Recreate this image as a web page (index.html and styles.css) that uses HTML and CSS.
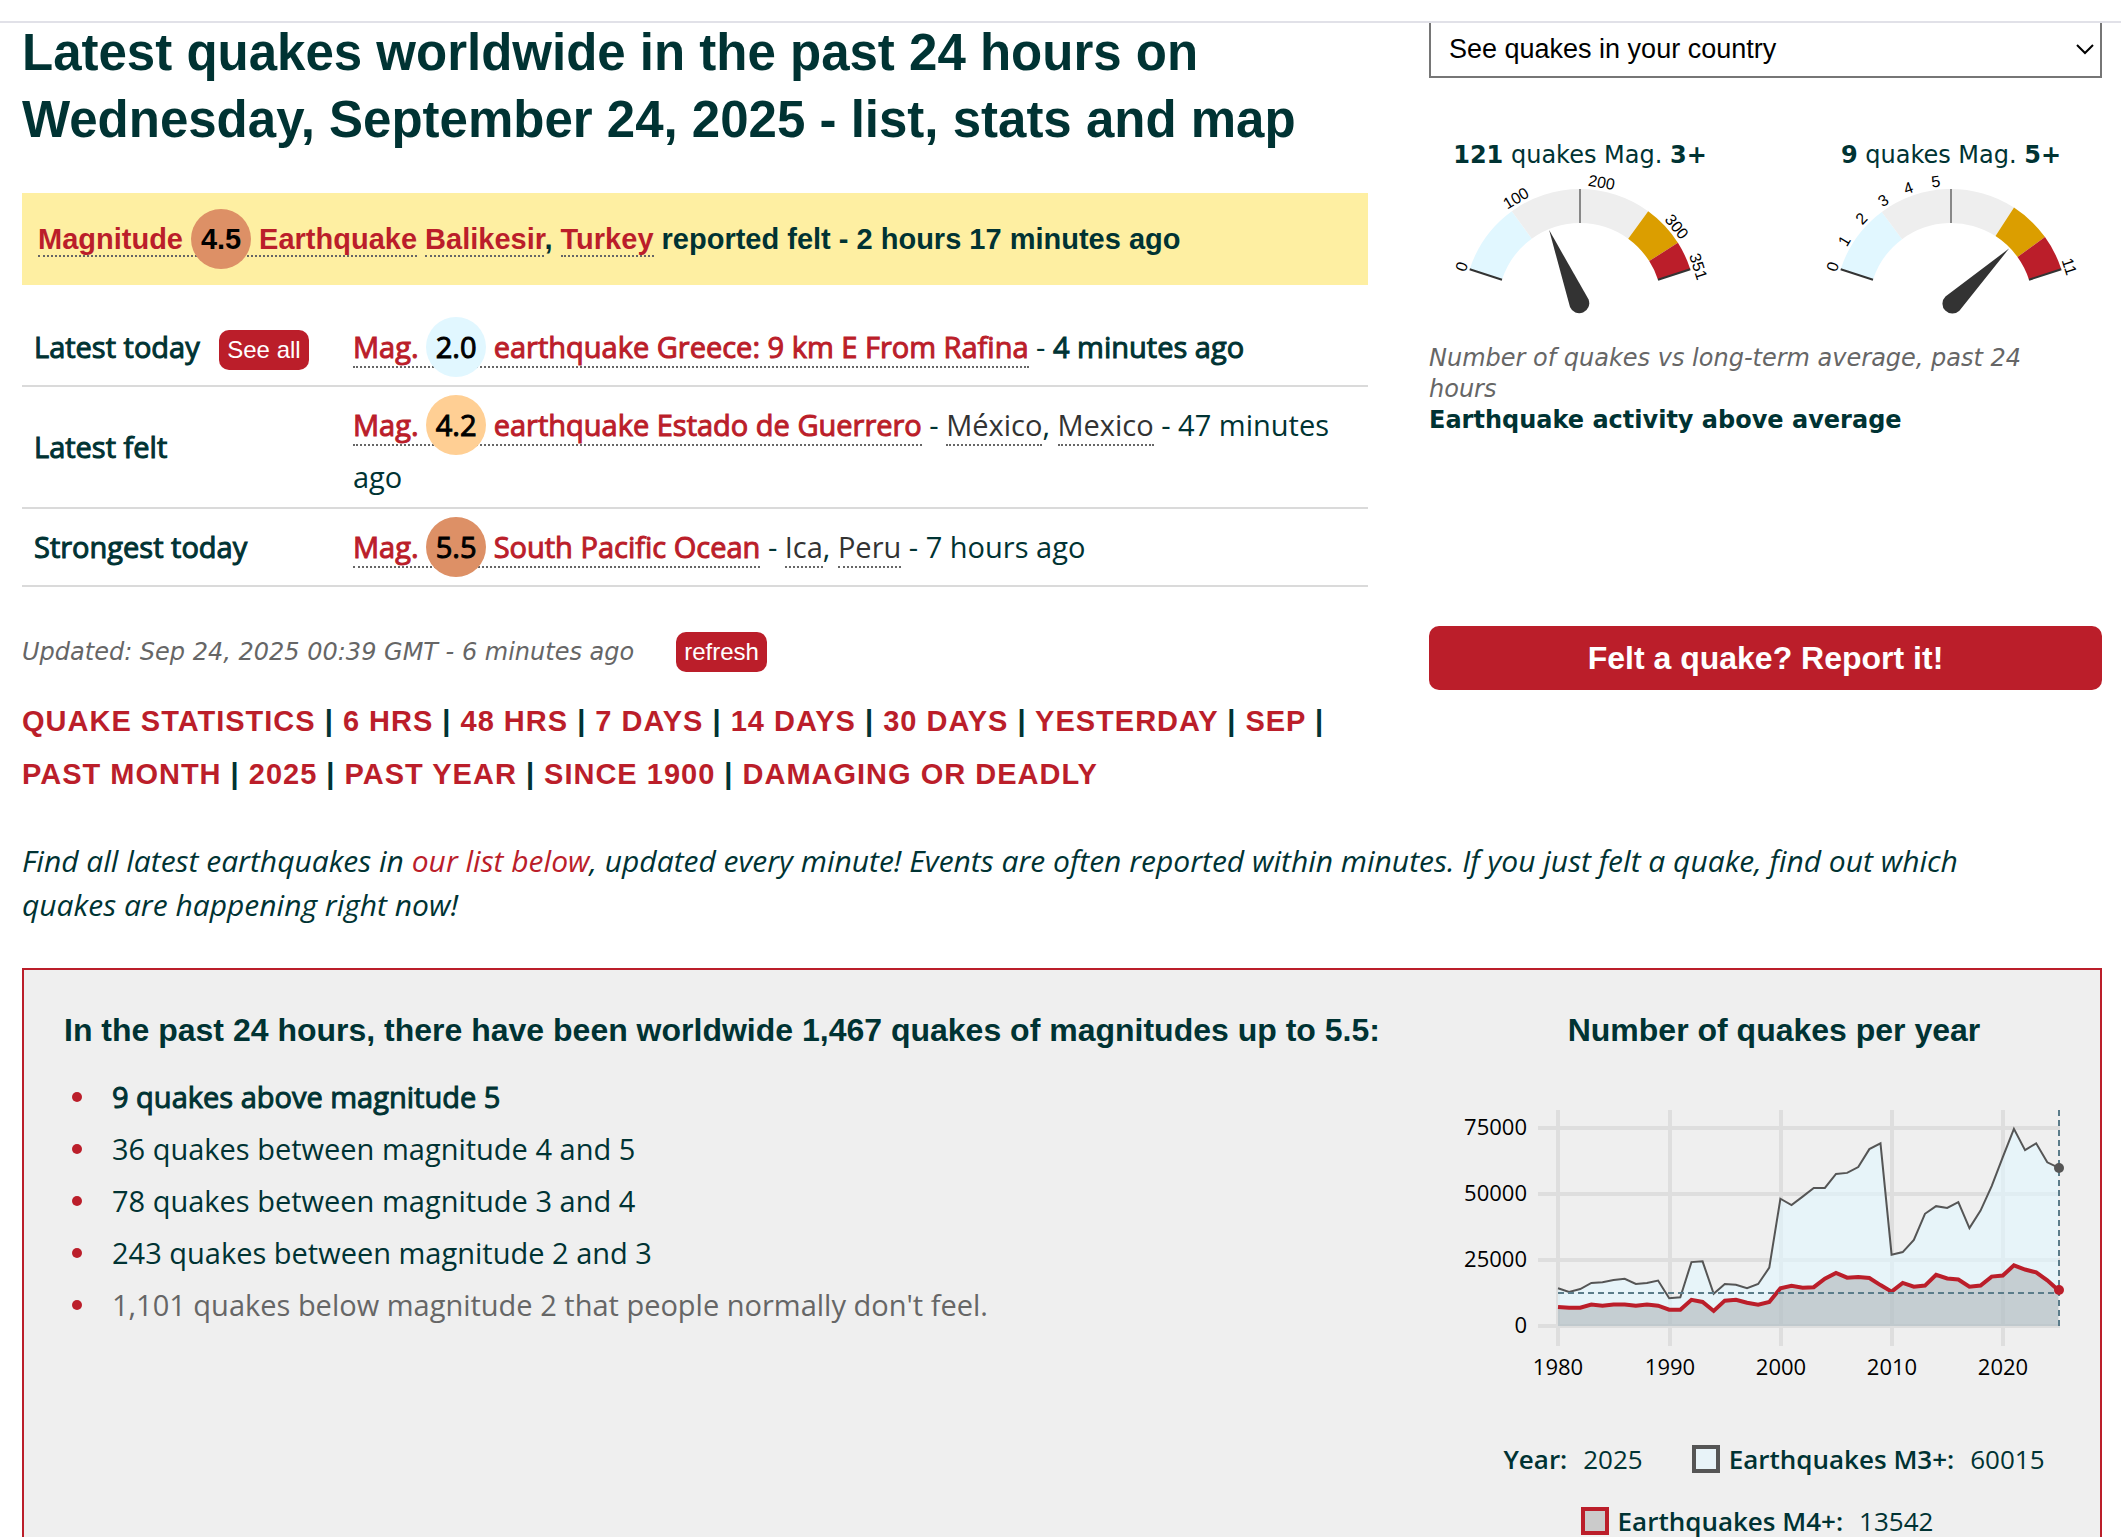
FILE: index.html
```html
<!DOCTYPE html>
<html lang="en">
<head>
<meta charset="utf-8">
<title>Latest quakes worldwide in the past 24 hours</title>
<meta name="viewport" content="width=device-width, initial-scale=1">
<link rel="stylesheet" href="styles.css">
</head>
<body>
<header class="topbar"></header>
<main class="page">
  <div class="overview">
    <section class="latest">
      <h1 class="title">Latest quakes worldwide in the past 24 hours on Wednesday, September 24, 2025 - list, stats and map</h1>
      <p class="alert"><a class="quake" href="#balikesir">Magnitude <span class="mag mag-strong">4.5</span> Earthquake</a> <a class="quake" href="#region">Balikesir</a>, <a class="quake" href="#turkey">Turkey</a> reported felt - 2 hours 17 minutes ago</p>
      <table class="summary">
        <tbody>
          <tr>
            <th scope="row" class="heavy">Latest today <button type="button" class="pill">See all</button></th>
            <td><a class="quake heavy" href="#rafina">Mag. <span class="mag mag-light">2.0</span> earthquake Greece: 9 km E From Rafina</a> - <b class="heavy">4 minutes ago</b></td>
          </tr>
          <tr>
            <th scope="row" class="heavy">Latest felt</th>
            <td><a class="quake heavy" href="#guerrero">Mag. <span class="mag mag-medium">4.2</span> earthquake Estado de Guerrero</a> - <span class="place">México</span>, <span class="place">Mexico</span> - 47 minutes ago</td>
          </tr>
          <tr>
            <th scope="row" class="heavy">Strongest today</th>
            <td><a class="quake heavy" href="#ica">Mag. <span class="mag mag-strong">5.5</span> South Pacific Ocean</a> - <span class="place">Ica</span>, <span class="place">Peru</span> - 7 hours ago</td>
          </tr>
        </tbody>
      </table>
      <div class="updated">
        <span class="note">Updated: Sep 24, 2025 00:39 GMT - 6 minutes ago</span>
        <button type="button" class="pill">refresh</button>
      </div>
      <nav class="periods"><a href="#stats">QUAKE STATISTICS</a> | <a href="#6h">6 HRS</a> | <a href="#48h">48 HRS</a> | <a href="#7d">7 DAYS</a> | <a href="#14d">14 DAYS</a> | <a href="#30d">30 DAYS</a> | <a href="#yesterday">YESTERDAY</a> | <a href="#sep">SEP</a> | <a href="#month">PAST MONTH</a> | <a href="#2025">2025</a> | <a href="#year">PAST YEAR</a> | <a href="#1900">SINCE 1900</a> | <a href="#damaging">DAMAGING OR DEADLY</a></nav>
    </section>
    <aside class="side">
      <div class="picker">
        <select class="country" aria-label="Country">
          <option>See quakes in your country</option>
        </select>
        <svg class="chevron" viewBox="0 0 18 12" aria-hidden="true"><path d="M1 2l8 8 8-8"/></svg>
      </div>
      <div class="gauges">
        <figure class="gauge">
          <figcaption><b>121</b> quakes Mag. <b>3+</b></figcaption>
          <svg viewBox="-140 -134 280 154" role="img" aria-label="121 of 351">
            <path class="low" d="M-110.3 -35.8A116 116 0 0 1 -68.2 -93.8L-48.2 -66.3A82 82 0 0 0 -78 -25.3Z"/>
            <path class="normal" d="M-68.2 -93.8A116 116 0 0 1 68.2 -93.8L48.2 -66.3A82 82 0 0 0 -48.2 -66.3Z"/>
            <path class="raised" d="M68.2 -93.8A116 116 0 0 1 97.9 -62.2L69.2 -43.9A82 82 0 0 0 48.2 -66.3Z"/>
            <path class="high" d="M97.9 -62.2A116 116 0 0 1 110.3 -35.8L78 -25.3A82 82 0 0 0 69.2 -43.9Z"/>
            <path class="ends" d="M-110.3 -35.8L-78 -25.3M110.3 -35.8L78 -25.3"/>
            <path class="mid" d="M0 -116V-82"/>
            <path class="needle" transform="rotate(-22.4)" d="M0 -81L10 -2A10 10 0 1 1 -10 -2Z"/>
            <g class="marks">
              <text y="-119" transform="rotate(-72)">0</text>
              <text y="-119" transform="rotate(-31)">100</text>
              <text y="-119" transform="rotate(10)">200</text>
              <text y="-119" transform="rotate(51)">300</text>
              <text y="-119" transform="rotate(72)">351</text>
            </g>
          </svg>
        </figure>
        <figure class="gauge">
          <figcaption><b>9</b> quakes Mag. <b>5+</b></figcaption>
          <svg viewBox="-140 -134 280 154" role="img" aria-label="9 of 11">
            <path class="low" d="M-110.3 -35.8A116 116 0 0 1 -69.2 -93.1L-48.9 -65.8A82 82 0 0 0 -78 -25.3Z"/>
            <path class="normal" d="M-69.2 -93.1A116 116 0 0 1 63 -97.4L44.5 -68.9A82 82 0 0 0 -48.9 -65.8Z"/>
            <path class="raised" d="M63 -97.4A116 116 0 0 1 94 -67.9L66.5 -48A82 82 0 0 0 44.5 -68.9Z"/>
            <path class="high" d="M94 -67.9A116 116 0 0 1 110.3 -35.8L78 -25.3A82 82 0 0 0 66.5 -48Z"/>
            <path class="ends" d="M-110.3 -35.8L-78 -25.3M110.3 -35.8L78 -25.3"/>
            <path class="mid" d="M0 -116V-82"/>
            <path class="needle" transform="rotate(45.8)" d="M0 -81L10 -2A10 10 0 1 1 -10 -2Z"/>
            <g class="marks">
              <text y="-119" transform="rotate(-72)">0</text>
              <text y="-119" transform="rotate(-59)">1</text>
              <text y="-119" transform="rotate(-46)">2</text>
              <text y="-119" transform="rotate(-33)">3</text>
              <text y="-119" transform="rotate(-20)">4</text>
              <text y="-119" transform="rotate(-7)">5</text>
              <text y="-119" transform="rotate(72)">11</text>
            </g>
          </svg>
        </figure>
      </div>
      <div class="activity">
        <p class="note">Number of quakes vs long-term average, past 24 hours</p>
        <p><b>Earthquake activity above average</b></p>
      </div>
      <button type="button" class="report">Felt a quake? Report it!</button>
    </aside>
  </div>
  <p class="intro">Find all latest earthquakes in <a href="#list">our list below</a>, updated every minute! Events are often reported within minutes. If you just felt a quake, find out which quakes are happening right now!</p>
  <section class="stats">
    <div>
      <h2 class="subtitle">In the past 24 hours, there have been worldwide 1,467 quakes of magnitudes up to 5.5:</h2>
      <ul class="counts">
        <li class="heavy">9 quakes above magnitude 5</li>
        <li>36 quakes between magnitude 4 and 5</li>
        <li>78 quakes between magnitude 3 and 4</li>
        <li>243 quakes between magnitude 2 and 3</li>
        <li class="faint">1,101 quakes below magnitude 2 that people normally don't feel.</li>
      </ul>
    </div>
    <div class="yearly">
      <h2 class="subtitle">Number of quakes per year</h2>
      <svg class="chart" viewBox="0 0 628 290" role="img" aria-label="Number of quakes per year">
        <g class="grid">
          <path d="M78 28H600M78 94H600M78 160H600M78 226H600"/>
          <path d="M98 10V246M210 10V246M321 10V246M432 10V246M543 10V246"/>
        </g>
        <g transform="translate(98 226) scale(11.12 -0.00264)">
          <polygon class="fill-m3" points="0,0 0,14300 1,12900 2,14000 3,16300 4,16600 5,17400 6,17900 7,15900 8,16300 9,17200 10,10500 11,10900 12,24200 13,24500 14,12200 15,15900 16,15600 17,14300 18,15900 19,22100 20,48200 21,45800 22,49000 23,52300 24,52300 25,57600 26,58000 27,60200 28,67000 29,69200 30,27000 31,28000 32,32600 33,42500 34,45400 35,44700 36,46900 37,37100 38,43700 39,53000 40,64000 41,74700 42,66600 43,69200 44,62000 45,60015 45,0"/>
          <polygon class="fill-m4" points="0,0 0,7200 1,6900 2,6900 3,8100 4,7700 5,8100 6,8100 7,7700 8,8100 9,7700 10,6200 11,6200 12,9900 13,9100 14,5700 15,9600 16,9900 17,8800 18,8100 19,9100 20,14300 21,15200 22,14500 23,14700 24,17900 25,20100 26,18300 27,18600 28,18200 29,15500 30,13000 31,16300 32,14900 33,15300 34,19400 35,18000 36,17600 37,14900 38,15300 39,18700 40,19100 41,23000 42,21400 43,20300 44,17300 45,13542 45,0"/>
          <polyline class="line-m3" points="0,14300 1,12900 2,14000 3,16300 4,16600 5,17400 6,17900 7,15900 8,16300 9,17200 10,10500 11,10900 12,24200 13,24500 14,12200 15,15900 16,15600 17,14300 18,15900 19,22100 20,48200 21,45800 22,49000 23,52300 24,52300 25,57600 26,58000 27,60200 28,67000 29,69200 30,27000 31,28000 32,32600 33,42500 34,45400 35,44700 36,46900 37,37100 38,43700 39,53000 40,64000 41,74700 42,66600 43,69200 44,62000 45,60015"/>
          <polyline class="line-m4" points="0,7200 1,6900 2,6900 3,8100 4,7700 5,8100 6,8100 7,7700 8,8100 9,7700 10,6200 11,6200 12,9900 13,9100 14,5700 15,9600 16,9900 17,8800 18,8100 19,9100 20,14300 21,15200 22,14500 23,14700 24,17900 25,20100 26,18300 27,18600 28,18200 29,15500 30,13000 31,16300 32,14900 33,15300 34,19400 35,18000 36,17600 37,14900 38,15300 39,18700 40,19100 41,23000 42,21400 43,20300 44,17300 45,13542"/>
        </g>
        <path class="crosshair" d="M599 10V226M98 193H599"/>
        <circle class="dot-m3" cx="599" cy="68" r="5"/>
        <circle class="dot-m4" cx="599" cy="190" r="5"/>
        <g class="axis-y">
          <text x="67" y="35">75000</text>
          <text x="67" y="101">50000</text>
          <text x="67" y="167">25000</text>
          <text x="67" y="233">0</text>
        </g>
        <g class="axis-x">
          <text x="98" y="275">1980</text>
          <text x="210" y="275">1990</text>
          <text x="321" y="275">2000</text>
          <text x="432" y="275">2010</text>
          <text x="543" y="275">2020</text>
        </g>
      </svg>
      <div class="legend">
        <span class="entry"><b>Year:</b> <span class="value">2025</span></span>
        <span class="entry"><i class="swatch swatch-m3"></i><b>Earthquakes M3+:</b> <span class="value">60015</span></span>
        <span class="entry last"><i class="swatch swatch-m4"></i><b>Earthquakes M4+:</b> <span class="value">13542</span></span>
      </div>
    </div>
  </section>
</main>
</body>
</html>
```
FILE: styles.css
```css
* { box-sizing: border-box; }

body {
  margin: 0;
  background: #fff;
  color: #033;
  font: 29px/44px "Open Sans", "Noto Sans", sans-serif;
}

h1, h2, p, ul, figure { margin: 0; padding: 0; }
a { color: #bb1e2a; text-decoration: none; }
button { border: 0; cursor: pointer; }

.topbar {
  position: sticky;
  top: 0;
  z-index: 1;
  height: 23px;
  background: #fff;
  border-bottom: 2px solid #e1e1e8;
}

.page { margin-top: -4px; padding: 0 19px 40px 22px; }

.overview {
  display: grid;
  grid-template-columns: 2fr 1fr;
  gap: 61px;
}

.title {
  font: bold 51px/67px "Liberation Sans", Arial, sans-serif;
}

.alert {
  margin-top: 40px;
  padding: 16px;
  background: #feefa2;
  font: bold 29px/44px "Liberation Sans", Arial, sans-serif;
}

.quake { border-bottom: 2px dotted #666; }
.place { border-bottom: 2px dotted #666; color: #333; }

.mag {
  display: inline-block;
  width: 60px;
  height: 60px;
  border-radius: 50%;
  color: #000;
  line-height: 60px;
  text-align: center;
}
.mag-light { background: #e1f7ff; }
.mag-medium { background: #ffcf94; }
.mag-strong { background: #dd9066; }

/* Open Sans regular, thickened without changing its widths */
.heavy { font-weight: normal; -webkit-text-stroke: 1px currentColor; }
.heavy .pill { -webkit-text-stroke: 0; }

.summary {
  width: 100%;
  margin-top: 24px;
  border-collapse: separate;
  border-spacing: 0;
}
.summary th, .summary td {
  padding: 8px 12px;
  border-bottom: 2px solid #dadada;
  text-align: left;
  vertical-align: middle;
}
.summary th { width: 319px; }

.pill {
  height: 40px;
  padding: 0 8px;
  border-radius: 10px;
  background: #bb1e2a;
  color: #fff;
  font: 24px/40px "Liberation Sans", Arial, sans-serif;
}
.summary .pill { margin-left: 12px; }

.updated {
  display: flex;
  align-items: center;
  gap: 42px;
  margin-top: 45px;
}
.note {
  color: #666;
  font: italic 24px/31px "DejaVu Sans", Verdana, sans-serif;
}

.periods {
  margin-top: 23px;
  font: bold 29px/53px "Liberation Sans", Arial, sans-serif;
  letter-spacing: 1px;
}

.side { display: flex; flex-direction: column; }
.picker { position: relative; }
.country {
  display: block;
  width: 100%;
  height: 59px;
  padding: 0 18px;
  border: 2px solid #767676;
  border-radius: 0;
  background: #fff;
  color: #000;
  font: 27px "Liberation Sans", Arial, sans-serif;
  appearance: none;
}
.chevron {
  position: absolute;
  right: 8px;
  top: 24px;
  width: 18px;
  height: 12px;
  fill: none;
  stroke: #000;
  stroke-width: 2;
  pointer-events: none;
}

.gauges {
  display: flex;
  justify-content: space-between;
  margin: 62px 11px 0;
}
.gauge { display: flex; flex-direction: column; align-items: center; }
.gauge figcaption {
  font: 24px/31px "DejaVu Sans", Verdana, sans-serif;
}
.gauge svg { width: 280px; height: 154px; }
.low { fill: #e1f7ff; }
.normal { fill: #eee; }
.raised { fill: #db9e00; }
.high { fill: #bb1e2a; }
.ends { stroke: #333; stroke-width: 2; }
.mid { stroke: #888; stroke-width: 2; }
.needle { fill: #333; }
.marks { font: 16px "Liberation Sans", Arial, sans-serif; text-anchor: middle; }

.activity {
  margin: 18px 0 190px;
  padding-right: 40px;
  font: 24px/31px "DejaVu Sans", Verdana, sans-serif;
}
.report {
  height: 64px;
  border-radius: 10px;
  background: #bb1e2a;
  color: #fff;
  font: bold 32px "Liberation Sans", Arial, sans-serif;
}

.intro {
  margin-top: 38px;
  padding-right: 60px;
  font-size: 30px;
  font-style: italic;
}

.stats {
  display: grid;
  grid-template-columns: 1fr 628px;
  margin-top: 41px;
  padding: 38px 12px 38px 40px;
  border: 2px solid #bb1e2a;
  background: #efefef;
}
.subtitle { font: bold 32px/44px "Liberation Sans", Arial, sans-serif; }

.counts { margin-top: 19px; list-style: none; line-height: 52px; }
.counts li { display: flex; align-items: center; gap: 30px; }
.counts li::before {
  content: "";
  width: 10px;
  height: 10px;
  margin-left: 8px;
  border-radius: 50%;
  background: #bb1e2a;
}
.faint { color: #666; }

.yearly { text-align: center; }
.chart { display: block; width: 100%; margin-top: 48px; }
.grid path { stroke: #dedede; stroke-width: 4; }
.fill-m3 { fill: #e1f7ff; fill-opacity: .6; }
.fill-m4 { fill: #777; fill-opacity: .3; }
.line-m3, .line-m4 { fill: none; vector-effect: non-scaling-stroke; }
.line-m3 { stroke: #555; stroke-width: 2; }
.line-m4 { stroke: #bb1e2a; stroke-width: 4; }
.crosshair { fill: none; stroke: #5b7c8a; stroke-width: 2; stroke-dasharray: 6 4; }
.dot-m3 { fill: #555; }
.dot-m4 { fill: #bb1e2a; }
.axis-x, .axis-y { fill: #000; font-size: 22px; }
.axis-y { text-anchor: end; }
.axis-x { text-anchor: middle; }

.legend {
  display: flex;
  flex-wrap: wrap;
  justify-content: center;
  column-gap: 49px;
  margin-top: 38px;
  line-height: 62px;
  font-size: 26px;
}
.entry { display: flex; align-items: center; }
.entry b { font-weight: 600; }
.last { padding-right: 34px; }
.value { margin-left: 16px; }
.swatch {
  width: 28px;
  height: 28px;
  margin-right: 9px;
  border: 4px solid #555;
  background: #e8f3f8;
}
.swatch-m4 { border-color: #bb1e2a; background: #cbcbcb; }
```
